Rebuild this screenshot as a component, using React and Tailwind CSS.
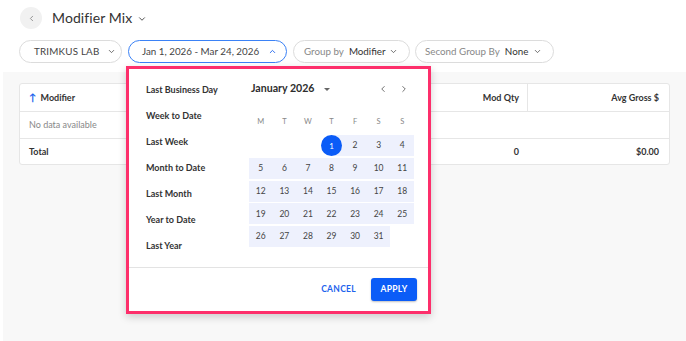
import React from "react";
import { ChevronDown, ChevronUp, ChevronLeft, ChevronRight } from "lucide-react";

const presets = [
  "Last Business Day",
  "Week to Date",
  "Last Week",
  "Month to Date",
  "Last Month",
  "Year to Date",
  "Last Year",
];

const weekdays = ["M", "T", "W", "T", "F", "S", "S"];

function buildCells() {
  const cells = [];
  for (let i = 0; i < 3; i++) cells.push(null);
  for (let d = 1; d <= 31; d++) cells.push(d);
  cells.push(null);
  return cells;
}

export default function App() {
  const cells = buildCells();
  return (
    <div
      className="relative w-[686px] h-[341px] overflow-hidden bg-white flex flex-col text-[#333] whitespace-nowrap"
      style={{ fontFamily: "Lato, 'Open Sans', sans-serif" }}
    >
      {/* header */}
      <div className="flex items-center pl-[20px] pt-[7px] h-[22px] box-content">
        <div className="w-[22px] h-[22px] rounded-full bg-[#f1f1f1] flex items-center justify-center text-[#777]">
          <ChevronLeft size={9} strokeWidth={2} />
        </div>
        <div className="ml-[10px] text-[14px] leading-none text-[#333] tracking-[0.1px]">Modifier Mix</div>
        <ChevronDown size={10} strokeWidth={2.2} className="ml-[5px] mt-[2px] text-[#444]" />
      </div>

      {/* filters */}
      <div className="flex items-center gap-[6px] pl-[19px] mt-[11px] text-[9.8px]">
        <div className="shrink-0 h-[23px] w-[103px] rounded-full border border-[#dcdcdc] flex items-center pl-[14px] text-[#444]">
          <span className="tracking-[0.2px] w-[67px]">TRIMKUS LAB</span>
          <ChevronDown size={9} strokeWidth={2.2} className="ml-[6px] text-[#555]" />
        </div>
        <div className="shrink-0 h-[23px] w-[159px] rounded-full border border-[#3b82f6] flex items-center pl-[13px] text-[#444]">
          <span className="w-[124px]">Jan 1, 2026 - Mar 24, 2026</span>
          <ChevronUp size={9} strokeWidth={2.4} className="ml-[2px] text-[#1d63ed]" />
        </div>
        <div className="shrink-0 h-[23px] w-[117px] rounded-full border border-[#dcdcdc] flex items-center pl-[10px]">
          <span className="text-[#888]">Group by</span>
          <span className="text-[#333] ml-[5px]">Modifier</span>
          <ChevronDown size={9} strokeWidth={2.2} className="ml-auto mr-[11px] text-[#555]" />
        </div>
        <div className="shrink-0 h-[23px] w-[139px] rounded-full border border-[#dcdcdc] flex items-center pl-[9px] -ml-[1px]">
          <span className="text-[#888]">Second Group By</span>
          <span className="text-[#333] ml-[5px]">None</span>
          <ChevronDown size={9} strokeWidth={2.2} className="ml-auto mr-[11px] text-[#555]" />
        </div>
      </div>

      {/* gray content area */}
      <div className="flex-1 mt-[9px] ml-[3px] bg-[#f8f8f8] pt-[11px] pl-[16px] pr-[16px]">
        <div className="w-[651px] bg-white border border-[#e6e6e6] rounded-[3px] text-[9px]">
          <div className="flex h-[28px] border-b border-[#e6e6e6] font-bold">
            <div className="flex-1 flex items-center pl-[9px] gap-[4px]">
              <span className="text-[#1d63ed] text-[10px]">↑</span>
              <span>Modifier</span>
            </div>
            <div className="w-[140px] flex items-center justify-end pr-[8px]">Mod Qty</div>
            <div className="w-[142px] border-l border-[#e6e6e6] flex items-center justify-end pr-[10px]">Avg Gross $</div>
          </div>
          <div className="h-[27px] border-b border-[#e6e6e6] flex items-center pl-[9px] text-[#888]">
            No data available
          </div>
          <div className="flex h-[25px] font-bold">
            <div className="flex-1 flex items-center pl-[9px]">Total</div>
            <div className="w-[140px] flex items-center justify-end pr-[8px]">0</div>
            <div className="w-[142px] flex items-center justify-end pr-[10px]">$0.00</div>
          </div>
        </div>
      </div>

      {/* popup */}
      <div className="absolute left-[126px] top-[66px] w-[305px] h-[248px] border-[3px] border-[#fd2f6b] bg-white shadow-[0_3px_8px_rgba(0,0,0,0.18)] flex flex-col">
        <div className="flex h-[199px] border-b border-[#e3e3e3]">
          <div className="w-[120px] pl-[17px] pt-[8px] flex flex-col">
            {presets.map((p) => (
              <div key={p} className="h-[26px] flex items-center text-[9px] font-bold text-[#333]">
                {p}
              </div>
            ))}
          </div>
          <div className="w-[165px] pt-[12px]">
            <div className="flex items-center h-[16px]">
              <span className="ml-[2px] text-[10.6px] font-bold text-[#2d2d2d] w-[72px]">January 2026</span>
              <span className="ml-[1px] mt-[1px] w-0 h-0 border-l-[3px] border-r-[3px] border-t-[3px] border-l-transparent border-r-transparent border-t-[#666]"></span>
              <ChevronLeft size={10} strokeWidth={2} className="ml-[48px] text-[#555]" />
              <ChevronRight size={10} strokeWidth={2} className="ml-[11px] text-[#555]" />
            </div>
            <div className="grid grid-cols-7 mt-[15px] h-[20px]">
              {weekdays.map((w, i) => (
                <div key={i} className="flex items-center justify-center text-[7.5px] text-[#888]">
                  {w}
                </div>
              ))}
            </div>
            <div className="grid grid-cols-7 mt-[3px] gap-y-[1.8px]">
              {cells.map((d, i) => {
                if (d === null) return <div key={i} className="h-[21px]"></div>;
                if (d === 1)
                  return (
                    <div key={i} className="h-[21px] relative flex items-center justify-center">
                      <div className="absolute right-0 top-0 h-full w-1/2 bg-[#eef1fd]"></div>
                      <div className="relative w-[21px] h-[21px] rounded-full bg-[#0b5cf7] text-white flex items-center justify-center text-[8px]">
                        1
                      </div>
                    </div>
                  );
                return (
                  <div key={i} className="h-[21px] bg-[#eef1fd] flex items-center justify-center text-[8.5px] text-[#444]">
                    {d}
                  </div>
                );
              })}
            </div>
          </div>
        </div>
        <div className="flex-1 flex items-center justify-end pr-[11px]">
          <span className="text-[8.5px] font-bold text-[#1d63ed] tracking-[0.3px] mr-[15px]">CANCEL</span>
          <div className="w-[46px] h-[23px] rounded-[3px] bg-[#0b5cf7] text-white text-[8.5px] font-bold tracking-[0.3px] flex items-center justify-center shadow-[0_1px_2px_rgba(0,0,0,0.25)]">
            APPLY
          </div>
        </div>
      </div>
    </div>
  );
}
